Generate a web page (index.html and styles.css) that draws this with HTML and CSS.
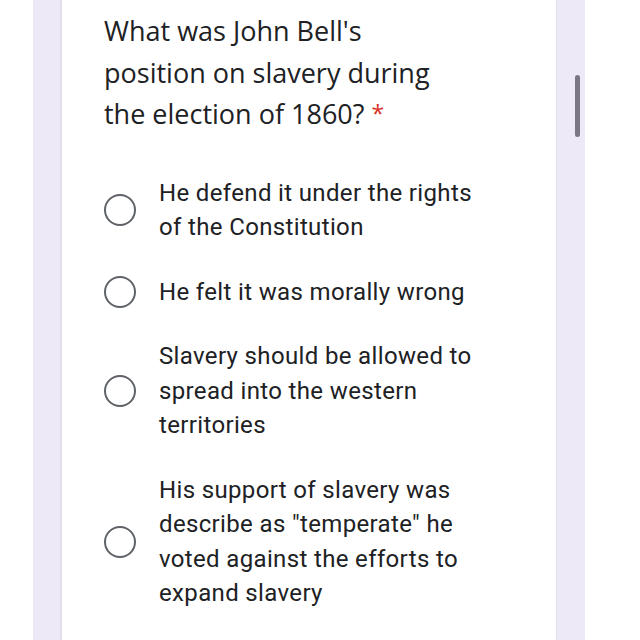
FILE: index.html
```html
<!DOCTYPE html>
<html>
<head>
<meta charset="utf-8">
<link rel="stylesheet" href="styles.css">
</head>
<body>
<div class="page">
  <div class="gutter-left"></div>
  <div class="strip strip-left"></div>
  <main class="card">
    <h1 class="question">What was John Bell's<br>position on slavery during<br>the election of 1860? <span class="req">*</span></h1>
    <ul class="options">
      <li class="option"><span class="radio"></span><span class="label">He defend it under the rights<br>of the Constitution</span></li>
      <li class="option"><span class="radio"></span><span class="label">He felt it was morally wrong</span></li>
      <li class="option"><span class="radio"></span><span class="label">Slavery should be allowed to<br>spread into the western<br>territories</span></li>
      <li class="option"><span class="radio"></span><span class="label">His support of slavery was<br>describe as "temperate" he<br>voted against the efforts to<br>expand slavery</span></li>
    </ul>
  </main>
  <div class="strip strip-right"><div class="scrollbar"></div></div>
  <div class="gutter-right"></div>
</div>
</body>
</html>
```

FILE: styles.css
```css
* { box-sizing: border-box; }
html, body { margin: 0; padding: 0; background: #ffffff; }
.page {
  display: flex;
  width: 640px;
  height: 640px;
  overflow: hidden;
}
.gutter-left { width: 33px; flex: none; background: #fff; }
.strip {
  flex: none;
  width: 29px;
  background: #ede9f7;
}
.strip-left { border-right: 2px solid #e2dfea; }
.strip-right {
  border-left: 1px solid #e2dfea;
  padding-top: 75px;
  padding-left: 18px;
}
.scrollbar {
  width: 5px;
  height: 62px;
  border-radius: 3px;
  background: #7b7683;
}
.gutter-right { flex: 1; background: #fff; }
.card {
  flex: none;
  width: 494px;
  background: #ffffff;
  padding: 10px 0 0 42px;
}
.question {
  margin: 0;
  font-family: "Open Sans", sans-serif;
  font-weight: 400;
  font-size: 27px;
  line-height: 41.5px;
  color: #202124;
  letter-spacing: 0;
}
.req { color: #d93025; font-size: 23px; vertical-align: 2px; }
.options {
  list-style: none;
  margin: 0;
  padding: 0;
  margin-top: 41px;
  display: flex;
  flex-direction: column;
  gap: 30px;
}
.option {
  display: flex;
  align-items: center;
  gap: 23px;
}
.radio {
  flex: none;
  width: 32px;
  height: 32px;
  border: 2.5px solid #5f6368;
  border-radius: 50%;
}
.label {
  font-family: Roboto, sans-serif;
  font-size: 24px;
  letter-spacing: 0.35px;
  line-height: 34.5px;
  color: #202124;
}
```
